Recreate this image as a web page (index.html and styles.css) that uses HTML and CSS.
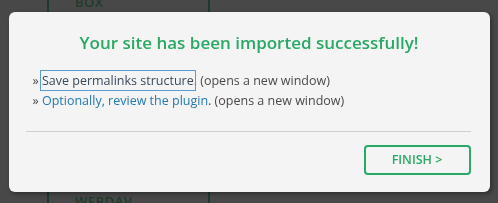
FILE: index.html
```html
<!DOCTYPE html>
<html lang="en">
<head>
    <meta charset="UTF-8">
    <meta name="viewport" content="width=device-width, initial-scale=1.0">
    <title>Import finished</title>
    <link rel="stylesheet" href="styles.css">
</head>
<body>
    <div class="page">
        <div class="column">
            <div class="label top">BOX</div>
            <div class="label bottom">WEBDAV</div>
        </div>
    </div>
    <div class="overlay">
        <div class="modal">
            <h2 class="title">Your site has been imported successfully!</h2>
            <ul class="steps">
                <li>&raquo; <a href="#" class="focused">Save permalinks structure</a>. (opens a new window)</li>
                <li>&raquo; <a href="#">Optionally, review the plugin</a>. (opens a new window)</li>
            </ul>
            <div class="divider"></div>
            <div class="actions">
                <button class="finish">FINISH &gt;</button>
            </div>
        </div>
    </div>
</body>
</html>
```
FILE: styles.css
```css
body {
    margin: 0;
    height: 203px;
    overflow: hidden;
    background: #484848;
    font-family: "Open Sans", "Noto Sans", sans-serif;
}
.page {
    height: 203px;
    padding-left: 47px;
}
.column {
    width: 163px;
    height: 203px;
    border-left: 2px solid #1d3a2c;
    border-right: 2px solid #1d3a2c;
    display: flex;
    flex-direction: column;
    justify-content: space-between;
    padding-left: 26px;
    box-sizing: border-box;
}
.label {
    color: #1f3a2b;
    font-size: 13px;
    font-weight: 600;
    letter-spacing: 0.5px;
    line-height: 16px;
}
.label.top {
    margin-top: -6px;
}
.label.bottom {
    margin-bottom: -6px;
}
.overlay {
    position: fixed;
    inset: 0;
    display: flex;
    justify-content: center;
    align-items: center;
}
.modal {
    width: 481px;
    height: 180px;
    box-sizing: border-box;
    background: #f4f4f4;
    border-radius: 6px;
    box-shadow: 2px 2px 4px rgba(0,0,0,0.35);
    padding: 19px 19px 0 24px;
    display: flex;
    flex-direction: column;
}
.title {
    margin: 0 0 17px;
    text-align: center;
    color: #2aa865;
    font-size: 17px;
    line-height: 23px;
    font-weight: 600;
    padding-right: 5px;
}
.steps {
    list-style: none;
    margin: 0;
    padding: 0;
    color: #4a4a4a;
    font-size: 12.5px;
    line-height: 20px;
}
.steps a {
    color: #2479b0;
    text-decoration: none;
}
.steps a.focused {
    outline: 1px solid #5b9bd5;
    outline-offset: 1px;
    color: #3a4a5a;
}
.divider {
    border-top: 1px solid #cfcfcf;
    margin: 20px 0 0 -7px;
}
.actions {
    display: flex;
    justify-content: flex-end;
    margin-top: 13px;
}
.finish {
    width: 107px;
    height: 30px;
    border: 2px solid #2aa865;
    border-radius: 4px;
    background: #f4f4f4;
    color: #2aa865;
    font-family: "Open Sans", "Noto Sans", sans-serif;
    font-size: 12.5px;
    font-weight: 600;
    cursor: pointer;
}
```
